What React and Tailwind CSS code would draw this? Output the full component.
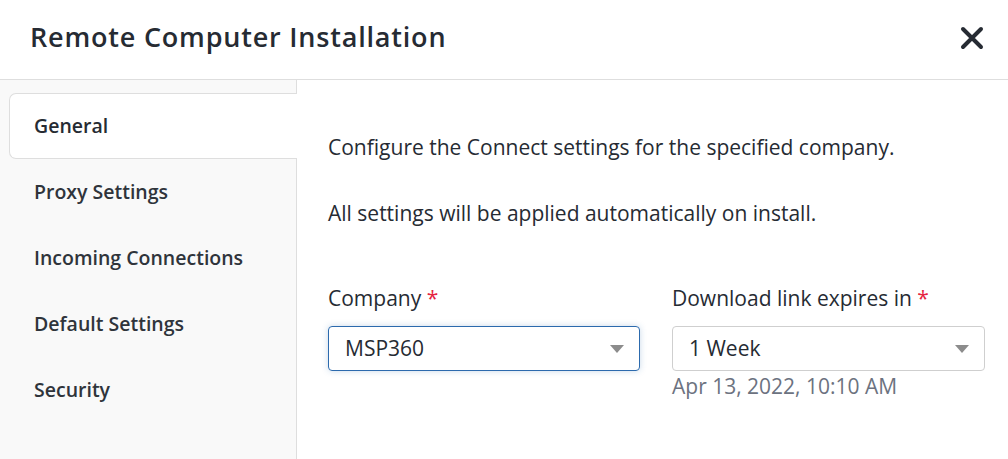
import React from "react";

const tabs = ["General", "Proxy Settings", "Incoming Connections", "Default Settings", "Security"];

function Caret() {
  return (
    <svg width="16" height="8" viewBox="0 0 16 8" className="shrink-0">
      <path d="M1 0 L15 0 L8 8 Z" fill="#8c8c8c" />
    </svg>
  );
}

export default function App() {
  return (
    <div className="w-[1008px] h-[459px] bg-white flex flex-col overflow-hidden text-[#262b33]" style={{ fontFamily: '"Open Sans", "Noto Sans", sans-serif' }}>
      <div className="h-[80px] shrink-0 flex items-center justify-between pl-[30px] pr-[22px] pb-[6px] border-b border-[#dedede]">
        <h1 className="text-[27px] font-semibold tracking-[0.8px] text-[#262b33] leading-none">Remote Computer Installation</h1>
        <svg width="24" height="24" viewBox="0 0 24 24" className="mr-[2px] mt-[2px]">
          <path d="M3 3 L21 21 M21 3 L3 21" stroke="#262b33" strokeWidth="4" strokeLinecap="round" />
        </svg>
      </div>
      <div className="flex flex-1 min-h-0">
        <div className="w-[297px] shrink-0 bg-[#f9f9f9] border-r border-[#dedede] pt-[13px] pl-[9px] flex flex-col">
          {tabs.map((t, i) => (
            <div
              key={t}
              className={
                i === 0
                  ? "h-[66px] flex items-center pl-[24px] bg-white border border-r-0 border-[#dedede] rounded-l-[7px] -mr-px text-[19.5px] font-semibold"
                  : "h-[66px] flex items-center pl-[25px] text-[19.5px] font-semibold text-[#2f343b]"
              }
            >
              {t}
            </div>
          ))}
        </div>
        <div className="flex-1 pl-[31px] pr-[23px] pt-[50px]">
          <p className="text-[21px] leading-[34px] whitespace-nowrap">Configure the Connect settings for the specified company.</p>
          <p className="text-[21px] leading-[34px] mt-[32px] whitespace-nowrap">All settings will be applied automatically on install.</p>
          <div className="flex gap-[32px] mt-[54px]">
            <div className="w-[312px]">
              <div className="text-[21px] leading-[28px] whitespace-nowrap">Company <span className="text-[#e5243f]">*</span></div>
              <div className="mt-[14px] h-[45px] border border-[#2c6aad] rounded-[4px] flex items-center justify-between pl-[16px] pr-[14px] shadow-[0_0_6px_rgba(44,106,173,0.25)]">
                <span className="text-[21px]">MSP360</span>
                <Caret />
              </div>
            </div>
            <div className="w-[313px]">
              <div className="text-[21px] leading-[28px] whitespace-nowrap">Download link expires in <span className="text-[#e5243f]">*</span></div>
              <div className="mt-[14px] h-[45px] border border-[#cfcfcf] rounded-[4px] flex items-center justify-between pl-[16px] pr-[14px]">
                <span className="text-[21px]">1 Week</span>
                <Caret />
              </div>
              <div className="text-[21px] leading-[28px] text-[#6c7280] mt-px whitespace-nowrap">Apr 13, 2022, 10:10 AM</div>
            </div>
          </div>
        </div>
      </div>
    </div>
  );
}
